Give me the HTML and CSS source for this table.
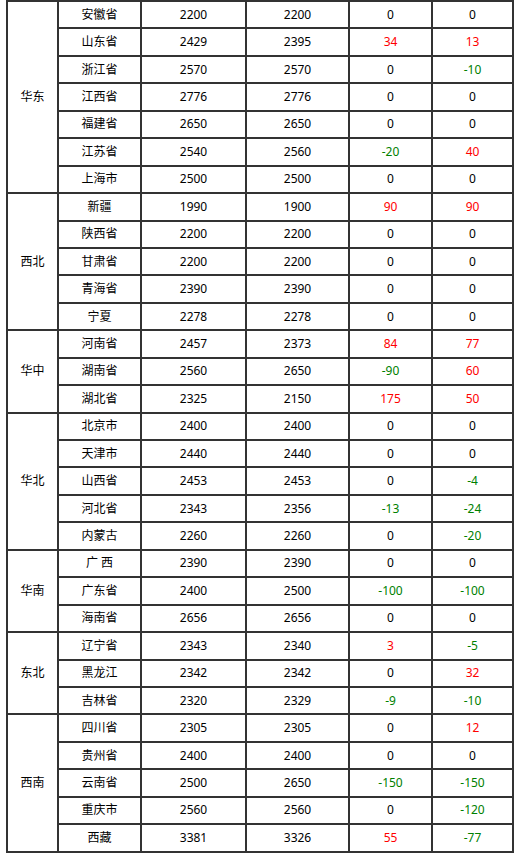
FILE: index.html
```html
<!DOCTYPE html>
<html lang="zh-CN">
<head>
<meta charset="utf-8">
<title>价格表</title>
<link rel="stylesheet" href="styles.css">
</head>
<body>
<table class="price-table">
  <colgroup>
    <col class="c-region"><col class="c-prov"><col class="c-a"><col class="c-b"><col class="c-c"><col class="c-d">
  </colgroup>
  <tbody>
    <tr><td class="region" rowspan="7">华东</td><td>安徽省</td><td>2200</td><td>2200</td><td>0</td><td>0</td></tr>
    <tr><td>山东省</td><td>2429</td><td>2395</td><td class="up">34</td><td class="up">13</td></tr>
    <tr><td>浙江省</td><td>2570</td><td>2570</td><td>0</td><td class="down">-10</td></tr>
    <tr><td>江西省</td><td>2776</td><td>2776</td><td>0</td><td>0</td></tr>
    <tr><td>福建省</td><td>2650</td><td>2650</td><td>0</td><td>0</td></tr>
    <tr><td>江苏省</td><td>2540</td><td>2560</td><td class="down">-20</td><td class="up">40</td></tr>
    <tr><td>上海市</td><td>2500</td><td>2500</td><td>0</td><td>0</td></tr>

    <tr><td class="region" rowspan="5">西北</td><td>新疆</td><td>1990</td><td>1900</td><td class="up">90</td><td class="up">90</td></tr>
    <tr><td>陕西省</td><td>2200</td><td>2200</td><td>0</td><td>0</td></tr>
    <tr><td>甘肃省</td><td>2200</td><td>2200</td><td>0</td><td>0</td></tr>
    <tr><td>青海省</td><td>2390</td><td>2390</td><td>0</td><td>0</td></tr>
    <tr><td>宁夏</td><td>2278</td><td>2278</td><td>0</td><td>0</td></tr>

    <tr><td class="region" rowspan="3">华中</td><td>河南省</td><td>2457</td><td>2373</td><td class="up">84</td><td class="up">77</td></tr>
    <tr><td>湖南省</td><td>2560</td><td>2650</td><td class="down">-90</td><td class="up">60</td></tr>
    <tr><td>湖北省</td><td>2325</td><td>2150</td><td class="up">175</td><td class="up">50</td></tr>

    <tr><td class="region" rowspan="5">华北</td><td>北京市</td><td>2400</td><td>2400</td><td>0</td><td>0</td></tr>
    <tr><td>天津市</td><td>2440</td><td>2440</td><td>0</td><td>0</td></tr>
    <tr><td>山西省</td><td>2453</td><td>2453</td><td>0</td><td class="down">-4</td></tr>
    <tr><td>河北省</td><td>2343</td><td>2356</td><td class="down">-13</td><td class="down">-24</td></tr>
    <tr><td>内蒙古</td><td>2260</td><td>2260</td><td>0</td><td class="down">-20</td></tr>

    <tr><td class="region" rowspan="3">华南</td><td>广 西</td><td>2390</td><td>2390</td><td>0</td><td>0</td></tr>
    <tr><td>广东省</td><td>2400</td><td>2500</td><td class="down">-100</td><td class="down">-100</td></tr>
    <tr><td>海南省</td><td>2656</td><td>2656</td><td>0</td><td>0</td></tr>

    <tr><td class="region" rowspan="3">东北</td><td>辽宁省</td><td>2343</td><td>2340</td><td class="up">3</td><td class="down">-5</td></tr>
    <tr><td>黑龙江</td><td>2342</td><td>2342</td><td>0</td><td class="up">32</td></tr>
    <tr><td>吉林省</td><td>2320</td><td>2329</td><td class="down">-9</td><td class="down">-10</td></tr>

    <tr><td class="region" rowspan="5">西南</td><td>四川省</td><td>2305</td><td>2305</td><td>0</td><td class="up">12</td></tr>
    <tr><td>贵州省</td><td>2400</td><td>2400</td><td>0</td><td>0</td></tr>
    <tr><td>云南省</td><td>2500</td><td>2650</td><td class="down">-150</td><td class="down">-150</td></tr>
    <tr><td>重庆市</td><td>2560</td><td>2560</td><td>0</td><td class="down">-120</td></tr>
    <tr><td>西藏</td><td>3381</td><td>3326</td><td class="up">55</td><td class="down">-77</td></tr>
  </tbody>
</table>
</body>
</html>
```

FILE: styles.css
```css
html, body {
  margin: 0;
  padding: 0;
  background: #fff;
}

body {
  font-family: "Noto Sans", "Noto Sans CJK SC", sans-serif;
  font-size: 12px;
  color: #000;
}

.price-table {
  margin-left: 6px;
  border: 1px solid #333;
  border-collapse: separate;
  border-spacing: 0;
  table-layout: fixed;
  width: 508px;
}

.price-table col.c-region { width: 51px; }
.price-table col.c-prov { width: 83px; }
.price-table col.c-a { width: 105px; }
.price-table col.c-b { width: 103px; }
.price-table col.c-c { width: 83px; }
.price-table col.c-d { width: 81px; }

.price-table tr {
  height: 27.45px;
}

.price-table td {
  border: 1px solid #333;
  padding: 0;
  text-align: center;
  vertical-align: middle;
  line-height: 16px;
  white-space: nowrap;
}

.price-table td.up { color: #ff0000; }
.price-table td.down { color: #008000; }
```
